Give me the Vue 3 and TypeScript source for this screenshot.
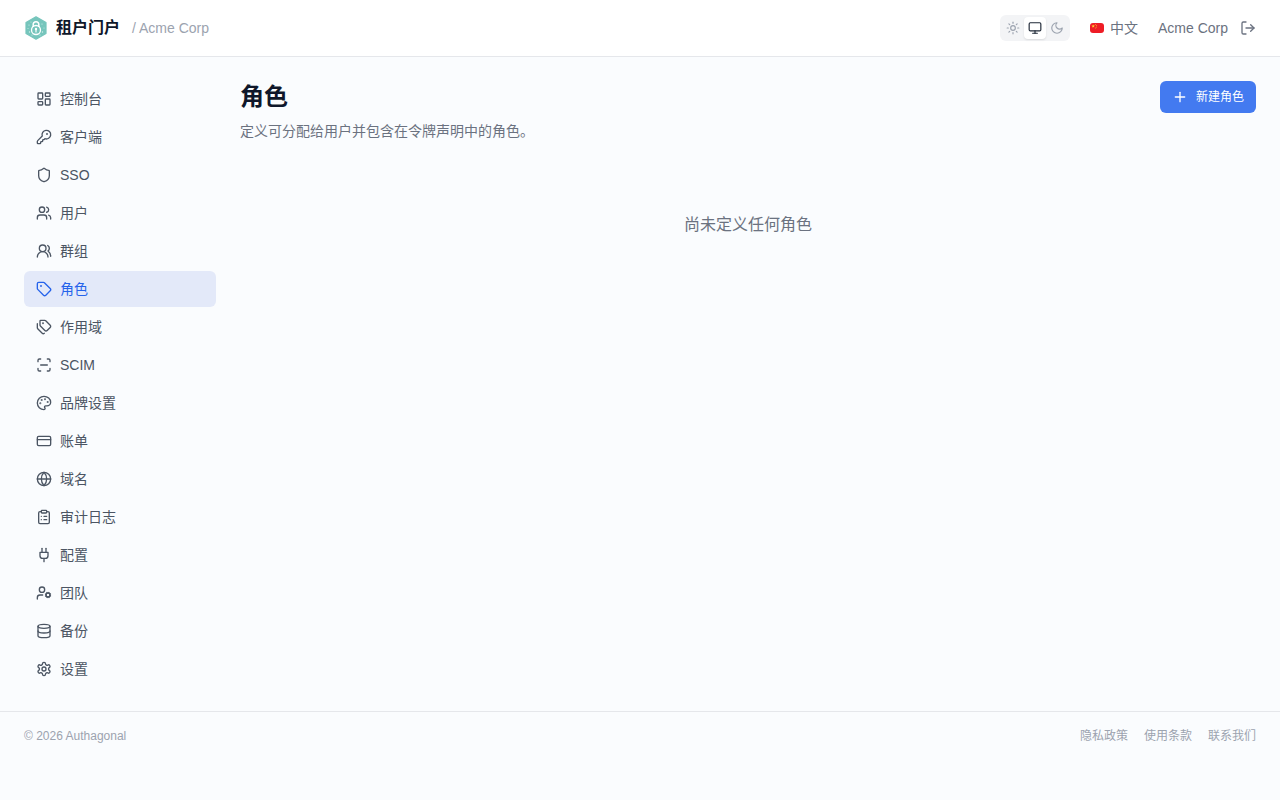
<script setup lang="ts">
interface NavItem {
  label: string
  icon: string
  active?: boolean
}

const icons: Record<string, string> = {
  dashboard:
    '<rect width="7" height="9" x="3" y="3" rx="1"/><rect width="7" height="5" x="14" y="3" rx="1"/><rect width="7" height="9" x="14" y="12" rx="1"/><rect width="7" height="5" x="3" y="16" rx="1"/>',
  key:
    '<path d="M2.586 17.414A2 2 0 0 0 2 18.828V21a1 1 0 0 0 1 1h3a1 1 0 0 0 1-1v-1a1 1 0 0 1 1-1h1a1 1 0 0 0 1-1v-1a1 1 0 0 1 1-1h.172a2 2 0 0 0 1.414-.586l.814-.814a6.5 6.5 0 1 0-4-4z"/><circle cx="16.5" cy="7.5" r=".5" fill="currentColor"/>',
  shield:
    '<path d="M20 13c0 5-3.5 7.5-7.66 8.95a1 1 0 0 1-.67-.01C7.5 20.5 4 18 4 13V6a1 1 0 0 1 1-1c2 0 4.5-1.2 6.24-2.72a1.17 1.17 0 0 1 1.52 0C14.51 3.81 17 5 19 5a1 1 0 0 1 1 1z"/>',
  users:
    '<path d="M16 21v-2a4 4 0 0 0-4-4H6a4 4 0 0 0-4 4v2"/><circle cx="9" cy="7" r="4"/><path d="M22 21v-2a4 4 0 0 0-3-3.87"/><path d="M16 3.13a4 4 0 0 1 0 7.75"/>',
  groups:
    '<path d="M18 21a8 8 0 0 0-16 0"/><circle cx="10" cy="8" r="5"/><path d="M22 20c0-3.37-2-6.5-4-8a5 5 0 0 0-.45-8.3"/>',
  tag:
    '<path d="M12.586 2.586A2 2 0 0 0 11.172 2H4a2 2 0 0 0-2 2v7.172a2 2 0 0 0 .586 1.414l8.704 8.704a2.426 2.426 0 0 0 3.42 0l6.58-6.58a2.426 2.426 0 0 0 0-3.42z"/><circle cx="7.5" cy="7.5" r=".5" fill="currentColor"/>',
  tags:
    '<path d="M13.172 2a2 2 0 0 1 1.414.586l6.71 6.71a2.4 2.4 0 0 1 0 3.408l-4.592 4.592a2.4 2.4 0 0 1-3.408 0l-6.71-6.71A2 2 0 0 1 6 9.172V3a1 1 0 0 1 1-1z"/><path d="M2 7v6.172a2 2 0 0 0 .586 1.414l6.71 6.71a2.4 2.4 0 0 0 3.191.193"/><circle cx="10.5" cy="6.5" r=".5" fill="currentColor"/>',
  scan:
    '<path d="M3 7V5a2 2 0 0 1 2-2h2"/><path d="M17 3h2a2 2 0 0 1 2 2v2"/><path d="M21 17v2a2 2 0 0 1-2 2h-2"/><path d="M7 21H5a2 2 0 0 1-2-2v-2"/><path d="M7 12h10"/>',
  palette:
    '<path d="M12 2C6.5 2 2 6.5 2 12s4.5 10 10 10c.926 0 1.648-.746 1.648-1.688 0-.437-.18-.835-.437-1.125-.29-.289-.438-.652-.438-1.125a1.64 1.64 0 0 1 1.668-1.668h1.996c3.051 0 5.555-2.503 5.555-5.554C21.965 6.012 17.461 2 12 2z"/><g fill="currentColor"><circle cx="13.5" cy="6.5" r=".5"/><circle cx="17.5" cy="10.5" r=".5"/><circle cx="8.5" cy="7.5" r=".5"/><circle cx="6.5" cy="12.5" r=".5"/></g>',
  card: '<rect width="20" height="14" x="2" y="5" rx="2"/><path d="M2 10h20"/>',
  globe:
    '<circle cx="12" cy="12" r="10"/><path d="M12 2a14.5 14.5 0 0 0 0 20 14.5 14.5 0 0 0 0-20"/><path d="M2 12h20"/>',
  clipboard:
    '<rect width="8" height="4" x="8" y="2" rx="1"/><path d="M16 4h2a2 2 0 0 1 2 2v14a2 2 0 0 1-2 2H6a2 2 0 0 1-2-2V6a2 2 0 0 1 2-2h2"/><path d="M12 11h4"/><path d="M12 16h4"/><path d="M8 11h.01"/><path d="M8 16h.01"/>',
  plug:
    '<path d="M12 22v-5"/><path d="M9 8V2"/><path d="M15 8V2"/><path d="M18 8v5a4 4 0 0 1-4 4h-4a4 4 0 0 1-4-4V8Z"/>',
  team:
    '<circle cx="18" cy="15" r="3"/><circle cx="9" cy="7" r="4"/><path d="M10 15H6a4 4 0 0 0-4 4v2"/><path d="m21.7 16.4-.9-.3"/><path d="m15.2 13.9-.9-.3"/><path d="m16.6 18.7.3-.9"/><path d="m19.1 12.2.3-.9"/><path d="m19.6 18.7-.4-1"/><path d="m16.8 12.3-.4-1"/><path d="m14.3 16.6 1-.4"/><path d="m20.7 13.8 1-.4"/>',
  database:
    '<ellipse cx="12" cy="5" rx="9" ry="3"/><path d="M3 5v14a9 3 0 0 0 18 0V5"/><path d="M3 12a9 3 0 0 0 18 0"/>',
  settings:
    '<path d="M12.22 2h-.44a2 2 0 0 0-2 2v.18a2 2 0 0 1-1 1.73l-.43.25a2 2 0 0 1-2 0l-.15-.08a2 2 0 0 0-2.73.73l-.22.38a2 2 0 0 0 .73 2.73l.15.1a2 2 0 0 1 1 1.72v.51a2 2 0 0 1-1 1.74l-.15.09a2 2 0 0 0-.73 2.73l.22.38a2 2 0 0 0 2.73.73l.15-.08a2 2 0 0 1 2 0l.43.25a2 2 0 0 1 1 1.73V20a2 2 0 0 0 2 2h.44a2 2 0 0 0 2-2v-.18a2 2 0 0 1 1-1.73l.43-.25a2 2 0 0 1 2 0l.15.08a2 2 0 0 0 2.73-.73l.22-.39a2 2 0 0 0-.73-2.73l-.15-.08a2 2 0 0 1-1-1.74v-.5a2 2 0 0 1 1-1.74l.15-.09a2 2 0 0 0 .73-2.73l-.22-.38a2 2 0 0 0-2.73-.73l-.15.08a2 2 0 0 1-2 0l-.43-.25a2 2 0 0 1-1-1.73V4a2 2 0 0 0-2-2z"/><circle cx="12" cy="12" r="3"/>',
  sun:
    '<circle cx="12" cy="12" r="4"/><path d="M12 2v2"/><path d="M12 20v2"/><path d="m4.93 4.93 1.41 1.41"/><path d="m17.66 17.66 1.41 1.41"/><path d="M2 12h2"/><path d="M20 12h2"/><path d="m6.34 17.66-1.41 1.41"/><path d="m19.07 4.93-1.41 1.41"/>',
  monitor: '<rect width="20" height="14" x="2" y="3" rx="2"/><path d="M8 21h8"/><path d="M12 17v4"/>',
  moon: '<path d="M12 3a6 6 0 0 0 9 9 9 9 0 1 1-9-9Z"/>',
  logout: '<path d="M9 21H5a2 2 0 0 1-2-2V5a2 2 0 0 1 2-2h4"/><path d="m16 17 5-5-5-5"/><path d="M21 12H9"/>',
  plus: '<path d="M5 12h14"/><path d="M12 5v14"/>',
}

const navItems: NavItem[] = [
  { label: '控制台', icon: 'dashboard' },
  { label: '客户端', icon: 'key' },
  { label: 'SSO', icon: 'shield' },
  { label: '用户', icon: 'users' },
  { label: '群组', icon: 'groups' },
  { label: '角色', icon: 'tag', active: true },
  { label: '作用域', icon: 'tags' },
  { label: 'SCIM', icon: 'scan' },
  { label: '品牌设置', icon: 'palette' },
  { label: '账单', icon: 'card' },
  { label: '域名', icon: 'globe' },
  { label: '审计日志', icon: 'clipboard' },
  { label: '配置', icon: 'plug' },
  { label: '团队', icon: 'team' },
  { label: '备份', icon: 'database' },
  { label: '设置', icon: 'settings' },
]

const themes = [
  { name: '浅色', icon: 'sun', active: false },
  { name: '跟随系统', icon: 'monitor', active: true },
  { name: '深色', icon: 'moon', active: false },
]

const footerLinks = ['隐私政策', '使用条款', '联系我们']
</script>

<template>
  <div class="page">
    <header class="topbar">
      <div class="brand">
        <a class="brand-link" href="#">
          <svg class="logo" viewBox="0 0 24 24" aria-hidden="true">
            <path
              d="M12 .8 22 6.5v11L12 23.2 2 17.5v-11z"
              fill="#76c5bc"
              stroke="#76c5bc"
              stroke-width="1.2"
              stroke-linejoin="round"
            />
            <g fill="#d3efeb">
              <circle cx="5" cy="9" r=".6" />
              <circle cx="4" cy="12.500" r=".5" />
              <circle cx="5.500" cy="16" r=".7" />
              <circle cx="8" cy="19" r=".6" />
              <circle cx="16" cy="19" r=".6" />
              <circle cx="18.500" cy="16" r=".7" />
              <circle cx="20" cy="12" r=".5" />
              <circle cx="18" cy="8" r=".6" />
              <circle cx="7" cy="6" r=".5" />
            </g>
            <path d="M9.200 11V8.600a2.800 2.800 0 0 1 5.600 0V11" fill="none" stroke="#fff" stroke-width="1.500" />
            <circle cx="12" cy="14" r="4.500" fill="none" stroke="#fff" stroke-width="1.300" />
            <circle cx="12" cy="13" r="1.200" fill="#fff" />
            <path d="M12 13v3" stroke="#fff" stroke-width="1.200" stroke-linecap="round" />
          </svg>
          <span class="brand-name">租户门户</span>
        </a>
        <span class="tenant">/ Acme Corp</span>
      </div>
      <div class="tools">
        <div class="themes" role="group">
          <button
            v-for="theme in themes"
            :key="theme.icon"
            type="button"
            class="theme"
            :class="{ active: theme.active }"
            :aria-label="theme.name"
            :aria-pressed="theme.active"
          >
            <svg class="icon small" viewBox="0 0 24 24" v-html="icons[theme.icon]" />
          </button>
        </div>
        <button type="button" class="language">
          <svg class="flag" viewBox="0 0 14 10" aria-hidden="true">
            <rect width="14" height="10" rx="3" fill="#ee1c25" />
            <path d="m3.200 1.400.4 1.200h1.300l-1 .8.4 1.200-1.100-.7-1.100.7.4-1.200-1-.8h1.300z" fill="#ffd52e" />
            <g fill="#f9a825">
              <circle cx="5.600" cy="1.400" r=".5" />
              <circle cx="6.500" cy="2.500" r=".5" />
              <circle cx="6.500" cy="3.900" r=".5" />
              <circle cx="5.600" cy="5" r=".5" />
            </g>
          </svg>
          <span>中文</span>
        </button>
        <div class="account">
          <span>Acme Corp</span>
          <button type="button" class="logout" aria-label="退出登录">
            <svg class="icon" viewBox="0 0 24 24" v-html="icons.logout" />
          </button>
        </div>
      </div>
    </header>

    <div class="body">
      <nav class="sidebar">
        <a
          v-for="item in navItems"
          :key="item.label"
          href="#"
          class="nav-link"
          :class="{ active: item.active }"
          :aria-current="item.active ? 'page' : undefined"
        >
          <svg class="icon" viewBox="0 0 24 24" v-html="icons[item.icon]" />
          <span>{{ item.label }}</span>
        </a>
      </nav>
      <main class="content">
        <div class="heading">
          <div>
            <h1>角色</h1>
            <p class="subtitle">定义可分配给用户并包含在令牌声明中的角色。</p>
          </div>
          <button type="button" class="create">
            <svg class="icon" viewBox="0 0 24 24" v-html="icons.plus" />
            <span>新建角色</span>
          </button>
        </div>
        <p class="empty">尚未定义任何角色</p>
      </main>
    </div>

    <footer class="footer">
      <span>© 2026 Authagonal</span>
      <div class="footer-links">
        <a v-for="link in footerLinks" :key="link" href="#">{{ link }}</a>
      </div>
    </footer>
  </div>
</template>

<style>
body {
  margin: 0;
  background: #fafcfe;
}
</style>

<style scoped>
.page {
  min-height: 100vh;
  background: #fafcfe;
  color: #0f172a;
  font-family: "Liberation Sans", "Noto Sans CJK SC", sans-serif;
  font-size: 14px;
  line-height: 20px;
}
.page *,
.page {
  box-sizing: border-box;
}
button {
  margin: 0;
  padding: 0;
  border: 0;
  background: none;
  color: inherit;
  font: inherit;
  cursor: pointer;
}
a {
  color: inherit;
  text-decoration: none;
}
h1,
p {
  margin: 0;
}
.icon {
  display: block;
  flex: none;
  width: 16px;
  height: 16px;
  fill: none;
  stroke: currentColor;
  stroke-width: 2;
  stroke-linecap: round;
  stroke-linejoin: round;
}
.icon.small {
  width: 14px;
  height: 14px;
}
.topbar {
  display: flex;
  align-items: center;
  justify-content: space-between;
  height: 57px;
  padding: 0 24px;
  border-bottom: 1px solid #e5e7eb;
  background: #fff;
}
.brand {
  display: flex;
  align-items: center;
  gap: 12px;
}
.brand-link {
  display: flex;
  align-items: center;
  gap: 8px;
}
.logo {
  width: 24px;
  height: 24px;
}
.brand-name {
  font-size: 16px;
  font-weight: 700;
  line-height: 24px;
}
.tenant {
  color: #9ca3af;
}
.tools {
  display: flex;
  align-items: center;
  gap: 20px;
  color: #6b7280;
}
.themes {
  display: flex;
  padding: 2px;
  border-radius: 6px;
  background: #f3f4f6;
}
.theme {
  padding: 4px;
  border-radius: 4px;
  color: #9ca3af;
}
.theme.active {
  background: #fff;
  color: #1f2937;
  box-shadow: 0 1px 2px rgba(0, 0, 0, 0.1);
}
.language {
  display: flex;
  align-items: center;
  gap: 6px;
}
.flag {
  width: 14px;
  height: 10px;
}
.account {
  display: flex;
  align-items: center;
  gap: 12px;
}
.body {
  display: flex;
  gap: 24px;
  padding: 24px;
}
.sidebar {
  display: flex;
  flex: none;
  flex-direction: column;
  gap: 2px;
  width: 192px;
}
.nav-link {
  display: flex;
  align-items: center;
  gap: 8px;
  padding: 8px 12px;
  border-radius: 6px;
  color: #4b5563;
}
.nav-link.active {
  background: #e3e9f9;
  color: #2563eb;
}
.content {
  flex: 1;
  min-width: 0;
}
.heading {
  display: flex;
  align-items: flex-start;
  justify-content: space-between;
}
h1 {
  font-size: 24px;
  font-weight: 700;
  line-height: 32px;
}
.subtitle {
  margin-top: 8px;
  color: #6b7280;
}
.create {
  display: flex;
  align-items: center;
  gap: 8px;
  height: 32px;
  padding: 0 12px;
  border-radius: 6px;
  background: #437af0;
  color: #fff;
  font-size: 12px;
  line-height: 16px;
}
.empty {
  padding: 72px 0 48px;
  color: #6b7280;
  font-size: 16px;
  line-height: 24px;
  text-align: center;
}
.footer {
  display: flex;
  align-items: center;
  justify-content: space-between;
  padding: 16px 24px;
  border-top: 1px solid #e5e7eb;
  color: #9ca3af;
  font-size: 12px;
  line-height: 16px;
}
.footer-links {
  display: flex;
  gap: 16px;
}
</style>
